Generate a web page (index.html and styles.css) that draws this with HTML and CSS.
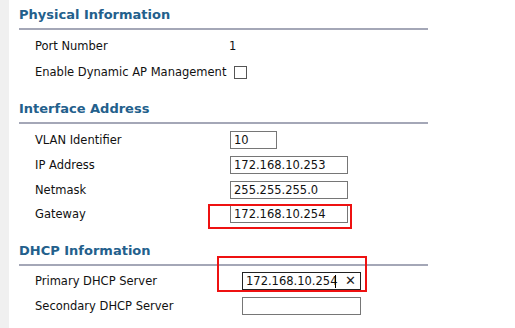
FILE: index.html
```html
<!DOCTYPE html>
<html lang="en">
<head>
    <meta charset="UTF-8">
    <title>Port Settings</title>
    <link rel="stylesheet" href="styles.css">
</head>
<body>
    <div class="strip"></div>
    <div class="content">
        <div class="section">
            <h2 class="section-title">Physical Information</h2>
            <div class="rows rows-physical">
                <div class="label">Port Number</div>
                <div class="value">1</div>
                <div class="label">Enable Dynamic AP Management</div>
                <div class="value"><span class="checkbox"></span></div>
            </div>
        </div>

        <div class="section">
            <h2 class="section-title">Interface Address</h2>
            <div class="rows rows-interface">
                <div class="label">VLAN Identifier</div>
                <div class="value"><input class="field field-short" type="text" value="10"></div>
                <div class="label">IP Address</div>
                <div class="value"><input class="field" type="text" value="172.168.10.253"></div>
                <div class="label">Netmask</div>
                <div class="value"><input class="field" type="text" value="255.255.255.0"></div>
                <div class="label">Gateway</div>
                <div class="value">
                    <span class="wrap">
                        <input class="field" type="text" value="172.168.10.254">
                        <span class="mark mark-gateway"></span>
                    </span>
                </div>
            </div>
        </div>

        <div class="section">
            <h2 class="section-title">DHCP Information</h2>
            <div class="rows rows-dhcp">
                <div class="label">Primary DHCP Server</div>
                <div class="value">
                    <span class="wrap">
                        <input class="field field-dhcp field-focus" type="text" value="172.168.10.254">
                        <span class="caret"></span>
                        <span class="clear">&#x2715;</span>
                        <span class="mark mark-dhcp"></span>
                    </span>
                </div>
                <div class="label">Secondary DHCP Server</div>
                <div class="value"><input class="field field-dhcp" type="text" value=""></div>
            </div>
        </div>
    </div>
</body>
</html>
```

FILE: styles.css
```css
* { margin: 0; padding: 0; box-sizing: border-box; }
body {
    font-family: 'DejaVu Sans', Verdana, sans-serif;
    font-size: 11.5px;
    color: #111;
    background: white;
    display: flex;
    height: 100vh;
    overflow: hidden;
}
.strip {
    width: 9px;
    background: #f0f0f0;
    flex-shrink: 0;
}
.content {
    padding: 6px 0 0 10px;
    width: 419px;
}
.section { margin-bottom: 15px; }
.section-title {
    font-size: 13px;
    font-weight: bold;
    color: #23608c;
    height: 24px;
    line-height: 18px;
    border-bottom: 2px solid #a4a7b7;
}
.rows {
    display: grid;
    grid-auto-rows: 25px;
    align-items: center;
    padding: 3px 0 0 16px;
}
.label { white-space: nowrap; }
.rows-physical { grid-template-columns: 194px 1fr; grid-auto-rows: 26px; }
.rows-interface { grid-template-columns: 195px 1fr; grid-auto-rows: 24.7px; padding-top: 4px; }
.rows-dhcp { grid-template-columns: 207px 1fr; }
.value { display: flex; align-items: center; }
.checkbox {
    width: 13px;
    height: 13px;
    border: 1px solid #555;
    margin-left: 5px;
    background: white;
}
.wrap { position: relative; display: inline-block; }
.field {
    display: block;
    width: 118px;
    height: 18px;
    border: 1px solid #767676;
    padding: 0 3px;
    font-family: 'DejaVu Sans', Verdana, sans-serif;
    font-size: 11.5px;
    color: #111;
    background: white;
}
.field-short { width: 47px; }
.field-dhcp { width: 119px; }
.field-focus { border-color: #222; }
.caret {
    position: absolute;
    left: 93px; top: 3px;
    width: 1px; height: 13px;
    background: #000;
}
.clear {
    position: absolute;
    right: 5px; top: 0;
    line-height: 18px;
    font-size: 13px;
    color: #222;
}
.mark {
    position: absolute;
    border: 2px solid #ee1111;
}
.mark-gateway { left: -22px; top: -1px; right: -4px; bottom: -6px; }
.mark-dhcp { left: -25px; top: -16px; right: -6px; bottom: -2px; }
```
